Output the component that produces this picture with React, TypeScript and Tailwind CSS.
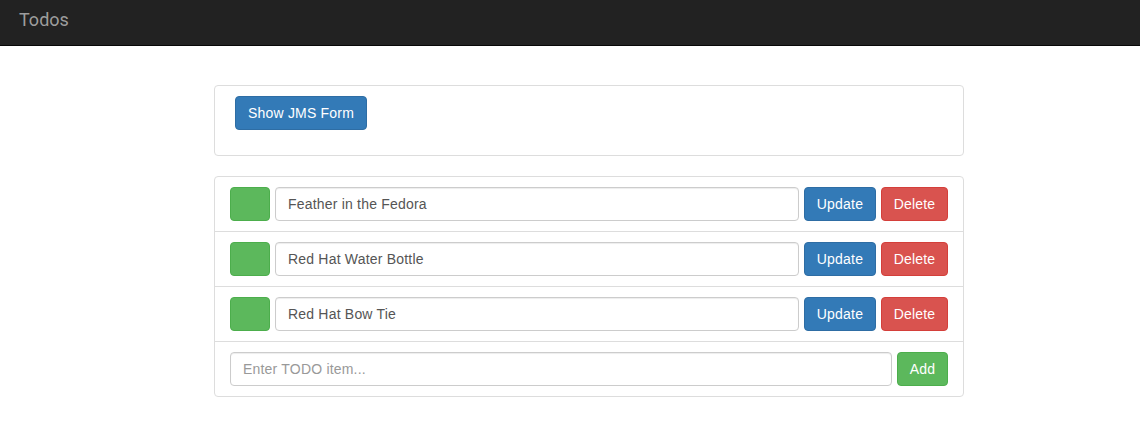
const todos = ['Feather in the Fedora', 'Red Hat Water Bottle', 'Red Hat Bow Tie'];

export default function App() {
  return (
    <div className="min-h-screen bg-white text-[14px] tracking-[0.2px] text-[#333] font-['Liberation_Sans',Arial,sans-serif]">
      {/* Navbar */}
      <nav className="h-[46px] bg-[#222] border-b border-[#080808]">
        <div className="px-[19px] pt-[8px] text-[18px] leading-[24px] tracking-normal text-[#9d9d9d] font-['Roboto',sans-serif]">
          Todos
        </div>
      </nav>

      <div className="w-[750px] ml-[214px] mt-[39px]">
        {/* JMS panel */}
        <div className="border border-[#ddd] rounded-[4px] h-[71px] pt-[10px] px-[20px]">
          <button className="h-[34px] px-[12px] rounded-[4px] bg-[#337ab7] border border-[#2e6da4] text-white text-[14px]">
            Show JMS Form
          </button>
        </div>

        {/* Todo list */}
        <div className="mt-[20px] border border-[#ddd] rounded-[4px]">
          {todos.map(t => (
            <div key={t} className="flex gap-[5px] items-center px-[15px] py-[10px] border-b border-[#ddd]">
              <div className="w-[40px] h-[34px] rounded-[4px] bg-[#5cb85c] border border-[#4cae4c]" />
              <input
                readOnly
                value={t}
                className="flex-1 h-[34px] px-[12px] rounded-[4px] border border-[#ccc] text-[#555] text-[14px] tracking-[0.2px] shadow-[inset_0_1px_1px_rgba(0,0,0,0.075)] outline-none"
              />
              <button className="w-[72px] h-[34px] rounded-[4px] bg-[#337ab7] border border-[#2e6da4] text-white">
                Update
              </button>
              <button className="w-[67px] h-[34px] rounded-[4px] bg-[#d9534f] border border-[#d43f3a] text-white">
                Delete
              </button>
            </div>
          ))}
          <div className="flex gap-[5px] items-center px-[15px] py-[10px]">
            <input
              placeholder="Enter TODO item..."
              className="flex-1 h-[34px] px-[12px] rounded-[4px] border border-[#ccc] text-[#555] text-[14px] tracking-[0.2px] placeholder:text-[#999] shadow-[inset_0_1px_1px_rgba(0,0,0,0.075)] outline-none"
            />
            <button className="w-[51px] h-[34px] rounded-[4px] bg-[#5cb85c] border border-[#4cae4c] text-white">
              Add
            </button>
          </div>
        </div>
      </div>
    </div>
  );
}
